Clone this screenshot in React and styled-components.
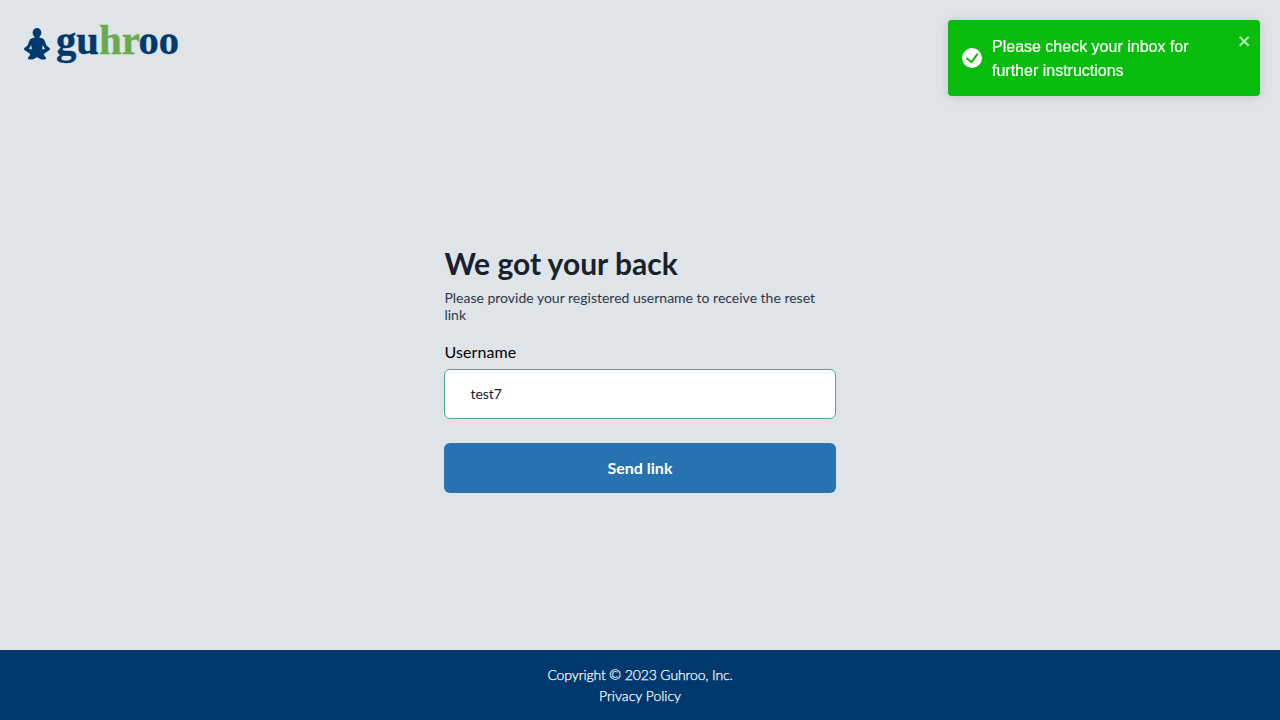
import React, { useState } from "react";
import styled, { createGlobalStyle } from "styled-components";

const GlobalStyle = createGlobalStyle`
  *, *::before, *::after { box-sizing: border-box; }
  body { margin: 0; background: #dee4e8; font-family: Lato, sans-serif; }
  h1, p { margin: 0; }
`;

const Page = styled.div`
  display: flex;
  flex-direction: column;
  height: 100vh;
  overflow: hidden;
`;

const Header = styled.header`
  height: 92px;
  padding: 10px 20px 0;
`;

const LogoSvg = styled.svg`
  display: block;
  overflow: visible;
  font-family: "Liberation Serif", serif;
  font-weight: 700;
`;

const Main = styled.main`
  flex: 1;
  display: flex;
  justify-content: center;
  padding-top: 152.4px;
`;

const Form = styled.form`
  width: 391.2px;
  display: flex;
  flex-direction: column;
`;

const Title = styled.h1`
  font-size: 30px;
  line-height: 38px;
  font-weight: 700;
  color: #1a202c;
`;

const Hint = styled.p`
  margin-top: 7px;
  font-size: 14px;
  line-height: 17px;
  color: #2d3748;
`;

const Label = styled.label`
  margin-top: 17px;
  font-size: 16px;
  line-height: 24px;
  letter-spacing: 0.1px;
  color: #000;
`;

const Input = styled.input`
  margin-top: 5px;
  height: 50px;
  padding: 0 25px 2px;
  border: 1px solid #4fab81;
  border-radius: 6px;
  background: #fff;
  color: #1a202c;
  font: 400 14px Lato, sans-serif;
  outline: none;
`;

const Submit = styled.button`
  margin-top: 24px;
  height: 50px;
  border: 0;
  border-radius: 6px;
  padding-bottom: 2px;
  background: #2773b2;
  color: #fff;
  font: 700 16px Lato, sans-serif;
  cursor: pointer;
`;

const Footer = styled.footer`
  height: 70px;
  display: flex;
  flex-direction: column;
  align-items: center;
  padding-top: 14px;
  background: #00396e;
  color: #fff;
  font-size: 14px;
  font-weight: 300;
  line-height: 21px;
  -webkit-text-stroke: 0.25px #fff;
`;

const Copyright = styled.span`
  letter-spacing: -0.12px;
`;

const FooterLink = styled.a`
  color: inherit;
  text-decoration: none;
`;

const Toast = styled.div`
  position: fixed;
  top: 20px;
  right: 20px;
  width: 312px;
  min-height: 64px;
  display: flex;
  padding: 8px;
  border-radius: 4px;
  background: #07bc0c;
  color: #fff;
  box-shadow: 0 1px 10px rgba(0, 0, 0, 0.1), 0 2px 15px rgba(0, 0, 0, 0.05);
  font: 400 16px/24px "Liberation Sans", sans-serif;
`;

const ToastBody = styled.div`
  flex: 1;
  display: flex;
  align-items: center;
  gap: 10px;
  padding: 6px;
`;

const ToastText = styled.div`
  padding-top: 1px;
  margin-bottom: -1px;
  -webkit-text-stroke: 0.2px #fff;
`;

const ToastIcon = styled.svg`
  flex: none;
  width: 20px;
  height: 20px;
`;

const Close = styled.button`
  align-self: flex-start;
  margin-top: 5px;
  padding: 0;
  border: 0;
  background: transparent;
  color: #fff;
  opacity: 0.7;
  cursor: pointer;
  svg { width: 14px; height: 16px; fill: currentColor; }
`;

function Logo() {
  return (
    <LogoSvg width="170" height="60" viewBox="20 10 170 60" role="img" aria-label="guhroo">
      <g fill="#00396e">
        <ellipse cx="37" cy="32.7" rx="4.4" ry="4.6" />
        <path d="M34.5 35.5h5v2.2c3 .2 4.5 1.1 5.2 3.2l1.8 4.6 3 2.6c.7.6.7 1.4 0 2l-5.7 4 .3 1.2 1.9 2.5c.5.9-.4 1.7-1.5 1.7h-3.2L37 57.3l-4.3 2.2h-3.2c-1.1 0-2-.8-1.5-1.7l1.9-2.5.3-1.2-5.7-4c-.7-.6-.7-1.4 0-2l3-2.6 1.8-4.6c.7-2.1 2.2-3 5.2-3.2z" />
      </g>
      <path d="M31.2 45l-1.7 3-.3 1 2.4.4.1-1.2zM42.8 45l1.7 3 .3 1-2.4.4-.1-1.2z" fill="#dee4e8" />
      <g fontSize="40" strokeWidth="0.4">
        <text x="56" y="54" textLength="43" lengthAdjust="spacingAndGlyphs" fill="#00396e" stroke="#00396e">gu</text>
        <text x="99" y="54" fontSize="43" textLength="41" lengthAdjust="spacingAndGlyphs" fill="#69aa4d" stroke="#69aa4d">hr</text>
        <text x="138.5" y="54" textLength="40.5" lengthAdjust="spacingAndGlyphs" fill="#00396e" stroke="#00396e">oo</text>
      </g>
    </LogoSvg>
  );
}

function SuccessToast({ onClose }) {
  return (
    <Toast role="alert">
      <ToastBody>
        <ToastIcon viewBox="0 0 24 24" fill="#fff">
          <path d="M12 0a12 12 0 1012 12A12.014 12.014 0 0012 0z" />
          <path d="m6 12.6 5.3 4.3L18.2 7.6" fill="none" stroke="#07bc0c" strokeWidth="2.4" strokeLinecap="round" strokeLinejoin="round" />
        </ToastIcon>
        <ToastText>Please check your inbox for further instructions</ToastText>
      </ToastBody>
      <Close type="button" aria-label="close" onClick={onClose}>
        <svg viewBox="0 0 14 16">
          <path fillRule="evenodd" d="M7.71 8.23l3.75 3.75-1.48 1.48-3.75-3.75-3.75 3.75L1 11.98l3.75-3.75L1 4.48 2.48 3l3.75 3.75L9.98 3l1.48 1.48-3.75 3.75z" />
        </svg>
      </Close>
    </Toast>
  );
}

export default function App() {
  const [username, setUsername] = useState("test7");
  const [toast, setToast] = useState(true);
  return (
    <Page>
      <GlobalStyle />
      <Header><Logo /></Header>
      <Main>
        <Form onSubmit={(e) => { e.preventDefault(); setToast(true); }}>
          <Title>We got your back</Title>
          <Hint>Please provide your registered username to receive the reset link</Hint>
          <Label htmlFor="username">Username</Label>
          <Input id="username" value={username} onChange={(e) => setUsername(e.target.value)} />
          <Submit type="submit">Send link</Submit>
        </Form>
      </Main>
      <Footer>
        <Copyright>Copyright © 2023 Guhroo, Inc.</Copyright>
        <FooterLink href="#">Privacy Policy</FooterLink>
      </Footer>
      {toast && <SuccessToast onClose={() => setToast(false)} />}
    </Page>
  );
}
